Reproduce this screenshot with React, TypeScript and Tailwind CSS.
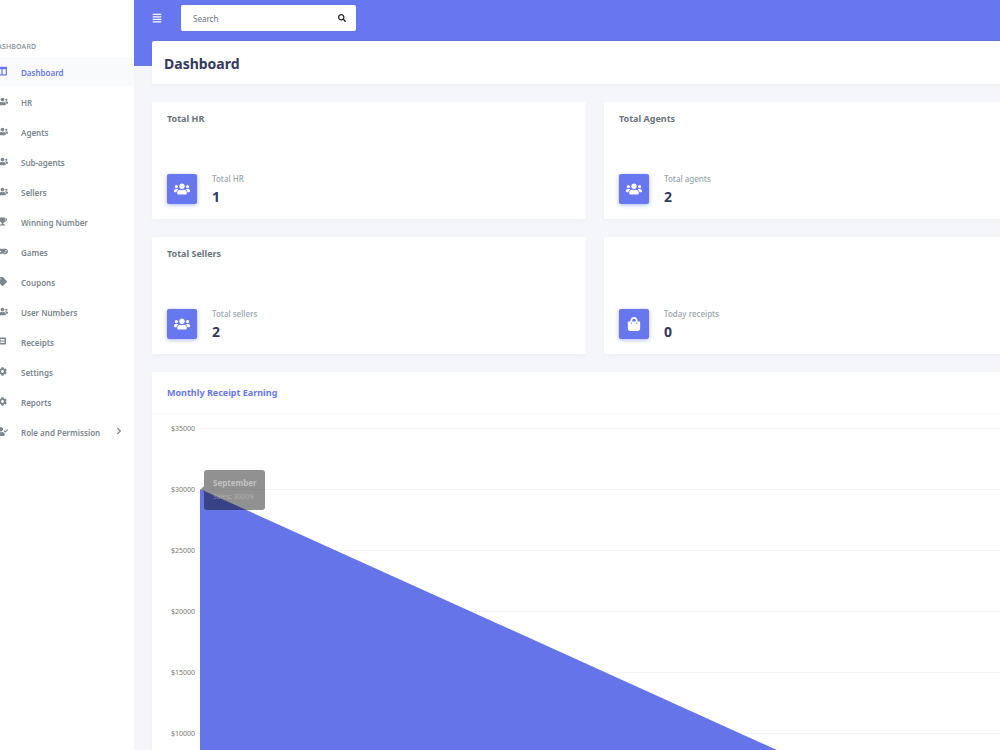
import React from 'react';
import {
  FaAlignJustify,
  FaChevronRight,
  FaCog,
  FaColumns,
  FaGamepad,
  FaListAlt,
  FaSearch,
  FaShoppingBag,
  FaTag,
  FaTrophy,
  FaUserCheck,
  FaUsers,
} from 'react-icons/fa';

const menu = [
  { label: 'Dashboard', icon: FaColumns, size: 10, active: true },
  { label: 'HR', icon: FaUsers, size: 11 },
  { label: 'Agents', icon: FaUsers, size: 11 },
  { label: 'Sub-agents', icon: FaUsers, size: 11 },
  { label: 'Sellers', icon: FaUsers, size: 11 },
  { label: 'Winning Number', icon: FaTrophy, size: 9 },
  { label: 'Games', icon: FaGamepad, size: 11 },
  { label: 'Coupons', icon: FaTag, size: 9 },
  { label: 'User Numbers', icon: FaUsers, size: 11 },
  { label: 'Receipts', icon: FaListAlt, size: 8 },
  { label: 'Settings', icon: FaCog, size: 9 },
  { label: 'Reports', icon: FaCog, size: 9 },
  { label: 'Role and Permission', icon: FaUserCheck, size: 11, children: true },
];

const stats = [
  { title: 'Total HR', label: 'Total HR', value: 1, icon: FaUsers },
  { title: 'Total Agents', label: 'Total agents', value: 2, icon: FaUsers },
  { title: 'Total Sellers', label: 'Total sellers', value: 2, icon: FaUsers },
  { title: '', label: 'Today receipts', value: 0, icon: FaShoppingBag },
];

const ticks = ['$35000', '$30000', '$25000', '$20000', '$15000', '$10000', '$5000', '$0'];

const Sidebar = () => (
  <aside className="w-[134px] shrink-0 overflow-hidden bg-white">
    <div className="-ml-2 pt-[41px]">
      <p className="text-[7px] leading-3 font-medium tracking-wide text-[#868e96]">DASHBOARD</p>
      <nav className="mt-1">
        {menu.map(({ label, icon: Icon, size, active, children }) => (
          <a
            key={label}
            href="#"
            className={`mb-[1px] flex h-[29px] items-center pt-[2px] text-[8px] font-semibold ${
              active ? 'bg-[#f8fafb] text-[#6777ef]' : 'text-[#7b868e]'
            }`}
          >
            <span className="flex w-[29px] shrink-0">
              <span className="flex w-5 justify-center pb-[3px]">
                <Icon size={size} />
              </span>
            </span>
            {label}
            {children && <FaChevronRight size={8} className="mr-[11px] mb-1 ml-auto" />}
          </a>
        ))}
      </nav>
    </div>
  </aside>
);

const StatCard = ({ title, label, value, icon: Icon }: (typeof stats)[number]) => (
  <section className="flex h-[117px] flex-col justify-between rounded-xs bg-white px-[15px] pt-[9px] pb-[10px] shadow-[0_2px_4px_rgba(0,0,0,0.03)]">
    <h2 className="h-4 text-[9px] leading-4 font-bold text-[#69757c]">{title}</h2>
    <div className="flex items-center gap-[15px]">
      <div className="flex size-[30px] items-center justify-center rounded-xs bg-[#6777ef] text-white shadow-[0_1px_4px_#acb5f6]">
        <Icon size={Icon === FaUsers ? 16 : 14} />
      </div>
      <div className="pt-1">
        <p className="text-[8px] leading-3 font-medium text-[#98a6ad]">{label}</p>
        <p className="text-[14px] leading-6 font-bold text-[#34395e]">{value}</p>
      </div>
    </div>
  </section>
);

const EarningChart = () => (
  <section className="rounded-xs bg-white shadow-[0_2px_4px_rgba(0,0,0,0.03)]">
    <h2 className="flex h-[42px] items-center border-b border-[#f9f9f9] px-[15px] text-[9px] font-bold text-[#6777ef]">
      Monthly Receipt Earning
    </h2>
    <div className="relative -mt-4 pr-[27px] pl-[15px]">
      {ticks.map((tick) => (
        <div key={tick} className="flex h-[61px] items-center gap-[2px]">
          <span className="w-7 pt-[2px] text-right text-[7px] text-[#777777]">{tick}</span>
          <span className="h-px flex-1 bg-[#f4f4f4]" />
        </div>
      ))}
      {/* the filled area covers the plot from the first tick to the last */}
      <svg
        className="absolute top-[30px] left-12 h-[428px] w-[calc(100%-75px)]"
        viewBox="0 0 100 35000"
        preserveAspectRatio="none"
      >
        <polygon points="0,4991 100,34990 100,35000 0,35000" fill="#6574e8" />
      </svg>
      <div className="absolute top-[72px] left-[52px] h-10 w-[61px] rounded-[3px] bg-black/43 px-[9px] pt-[6px] text-[8px] leading-[14px] text-white/45">
        <span className="absolute top-4 -left-[3px] border-y-[3px] border-r-[3px] border-y-transparent border-r-black/43" />
        <p className="font-bold">September</p>
        <p className="text-[7px] text-white/30">Sales: 30009</p>
      </div>
    </div>
  </section>
);

const App = () => {
  return (
    <div className="flex h-screen overflow-hidden bg-[#f4f6f9] font-['Noto_Sans',sans-serif]">
      <Sidebar />
      <div className="min-w-0 flex-1">
        <header className="flex h-[66px] items-start bg-[#6777ef] pt-[5px] pl-[18px]">
          <button aria-label="Toggle menu" className="flex h-[26px] w-[29px] items-center text-white">
            <FaAlignJustify size={10} />
          </button>
          <form className="flex h-[26px] w-[175px] items-center rounded-xs bg-white pr-[10px] pl-3">
            <input
              type="text"
              aria-label="Search"
              placeholder="Search"
              className="min-w-0 flex-1 pt-[2px] text-[8px] outline-none placeholder:text-[#6c757d]"
            />
            <button type="button" aria-label="Submit search" className="text-[#222222]">
              <FaSearch size={8} />
            </button>
          </form>
        </header>
        <main className="-mt-[25px] -mr-[38px] pl-[18px]">
          <div className="flex h-[43px] items-center rounded-xs bg-white px-3 shadow-[0_2px_4px_rgba(0,0,0,0.03)]">
            <h1 className="pt-[2px] text-[14px] font-bold text-[#34395e]">Dashboard</h1>
          </div>
          <div className="my-[18px] grid grid-cols-2 gap-[18px]">
            {stats.map((stat) => (
              <StatCard key={stat.label} {...stat} />
            ))}
          </div>
          <EarningChart />
        </main>
      </div>
    </div>
  );
};

export default App;
